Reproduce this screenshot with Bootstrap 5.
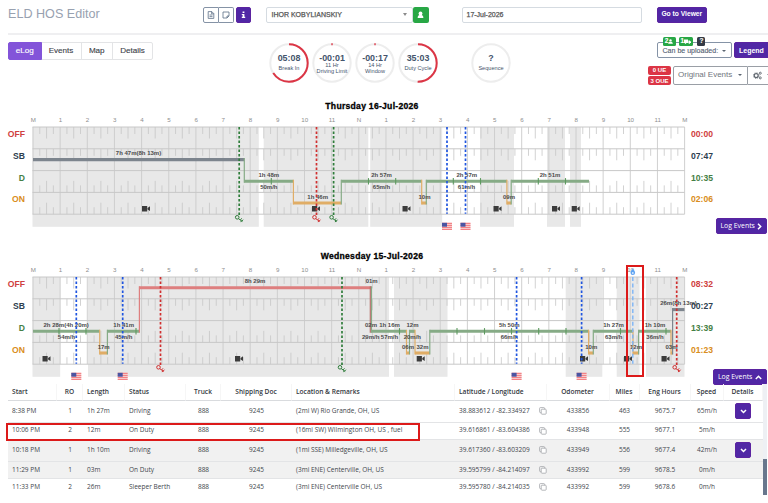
<!DOCTYPE html>
<html lang="en">
<head>
<meta charset="utf-8">
<meta name="viewport" content="width=device-width, initial-scale=1">
<title>ELD HOS Editor</title>
<link href="https://cdn.jsdelivr.net/npm/bootstrap@5.3.0/dist/css/bootstrap.min.css" rel="stylesheet">
<style>
body{font-family:"Liberation Sans",Arial,sans-serif;font-size:7px;line-height:1;color:#4a4f57;width:768px;height:503px;overflow:hidden;background:#fff}
.btn,.form-control,.badge{font-size:7px;line-height:1;border-radius:2px;padding:0;font-family:inherit;white-space:nowrap}
.top-bar{height:34.5px;padding:7px 0 0 8px;margin-right:0}
.top-bar::after{content:"";position:absolute;left:8px;right:0;top:33px;height:1.5px;background:#efeff1}
.app-title{font-size:12.6px;color:#98a1b0;width:195px;margin:0;line-height:15px;font-weight:400}
.sq{width:15.5px;height:15.5px;display:flex;align-items:center;justify-content:center}
.btn-slate{border:1px solid #8593a6;background:#fff;color:#5c6f86}
.btn-slate.lft{border-radius:2px 0 0 2px}
.btn-slate.rgt{border-radius:0 2px 2px 0}
.btn-violet{background:#5027a5;border:1px solid #5b23a0;color:#fff}
.btn-violet:hover{background:#45208f;color:#fff}
#infoBtn{margin-left:1.5px}
#viewerBtn{width:50px;height:15.5px;margin-left:14.8px;font-size:6.7px}
.field{height:15.5px;border:1px solid #d5dbe1;border-radius:2px;padding:0 5px;-webkit-text-stroke:.25px #555;color:#555;white-space:nowrap}
.driver{width:147.5px;margin-left:14.5px}
.date-field{width:180.5px;margin-left:33px;padding-left:4px}
.caret{border-left:2.5px solid transparent;border-right:2.5px solid transparent;border-top:3px solid #8b8b8b;display:inline-block;flex:none}
.caret.sm{border-left-width:2px;border-right-width:2px;border-top-width:2px;border-top-color:#5c6672}
.caret.sm.lite{border-top-color:#fff}
.tool-bar{height:63.5px;padding:7.5px 0 0 8px}
.tabs .btn{height:18px;border:1px solid #e3e4e6;font-size:8.1px;color:#3d4248;padding:0;-webkit-text-stroke:.12px currentColor}
.tabs .btn.active{background:#8354d9;border-color:#8354d9;color:#fff}
.tabs .t1{width:33.5px}.tabs .t2{width:41px}.tabs .t3{width:32.5px}.tabs .t4{width:41px}
.dials{margin-left:115.5px;margin-top:.8px}
.dials svg{width:40px;height:40px;display:block;margin-right:3.15px}
.dials svg:last-child{margin-left:29.8px}
.dials text{text-anchor:middle;fill:#44546c}
.big{font-size:8.9px;font-weight:700}.tiny{font-size:5.6px}
.right-tools{width:128px;position:relative}
.upl-row{padding-left:17px;gap:2px}
.upl{width:75px;flex:none;white-space:nowrap;height:16px;font-size:7.05px;border:1px solid #8593a6;border-radius:2px;color:#556274;padding:1px 5px 0 4.5px;-webkit-text-stroke:.12px}
.upl-badges{position:absolute;top:-6px;left:4.5px}
.upl-badges .badge{height:9px;border-radius:1.5px;display:flex;align-items:center;justify-content:center;font-size:6.5px}
.b1{width:13px}.b2{width:14px;margin-left:3.3px}.b3{width:8px;margin-left:4.7px}
.bg-ok{background:#28a745}.bg-ink{background:#343a46}.bg-err{background:#dc3545}
.legend-btn{width:42px;flex:none;height:16px;font-weight:700;font-size:7px;text-align:left;padding:0 4px}
.evt-row{padding-left:8px;margin-top:7.7px}
.ue{gap:1.8px;margin-right:2px;flex:none}
.ue .badge{width:23px;height:9px;font-size:6px;display:flex;align-items:center;justify-content:center;border-radius:2px}
.evt{height:19.5px;border:1px solid #9a9fa6;font-size:8px;color:#70767d;background:#fff;flex:none;white-space:nowrap}
.evt.main{width:75px;padding:0 5px 0 4px;border-radius:2px 0 0 2px}
.evt.cog{width:40px;border-left:0;border-radius:0;padding-left:4.5px}
.evt.cog .caret{margin-left:5px}
.log-day{height:150.2px}
.log-day.second{height:136px}
.day-title{font-size:8.6px;letter-spacing:.27px;font-weight:700;color:#000;height:17px;line-height:17px;width:744px;text-align:center;margin:0;-webkit-text-stroke:.3px #000}
.codes{width:33px;padding:9px 8px 0 0;text-align:right;font-weight:700;font-size:8.6px}
.sums{width:83px;padding:9px 1px 0 6px;font-weight:700;font-size:8.6px}
.codes div,.sums .v{height:21.8px;line-height:21.8px}
.c-off{color:#cf4040}.c-sb{color:#2d3e4f}.c-d{color:#458045}.c-on{color:#d98d20}
.log-btn{width:51.5px;height:16px;font-family:"Open Sans","Noto Sans",sans-serif;font-size:6.9px;margin-top:6.7px;padding:1px 4px 0}
.second .log-btn{width:54px;margin-top:7.5px}
.grid-svg{width:652px;height:119px;overflow:visible;display:block;flex:none}
.grid-svg .ax{font-size:6.2px;fill:#8e8e8e;text-anchor:middle}
.grid-svg .lb{font-size:6px;font-weight:700;fill:#4c4c4c;text-anchor:middle}
.events-wrap{height:111px;padding-left:8px}
.events{width:754.5px;table-layout:fixed;margin:0;font-family:"Open Sans","Noto Sans",sans-serif;font-size:6.5px;color:#41464c;border-collapse:separate;border-spacing:0}
.events th,.events td{padding:0 0 0 4px;vertical-align:middle;white-space:nowrap;line-height:1;border-bottom:1px solid #e3e4e6}
.events th{height:16.5px;font-weight:600;font-size:6.6px;color:#33383e;border-right:1px solid #f6f6f6;border-bottom-color:#d9dbde}
.events .c{text-align:center;padding-left:0}
.events tr.h1r td{height:21.9px}.events tr.h2r td{height:17.2px}.events tr.last td{height:16.5px;border:0}
.events tr.alt td{background:#f1f1f1}
.events .sq{width:16px;height:16px;margin:0 auto}
.scroll-track{width:4.5px;background:#eef0f4;height:111px}
.scroll-thumb{height:36px;background:#68778d;margin-top:75px}
.mark-box{position:absolute;border:2px solid #dc1a1a;pointer-events:none}
.mark-col{left:626px;top:265px;width:18px;height:112px}
.mark-row{left:6px;top:423px;width:414px;height:18px}
</style>
<script src="https://cdn.jsdelivr.net/npm/bootstrap@5.3.0/dist/js/bootstrap.bundle.min.js"></script>
</head>
<body class="position-relative">
<header class="top-bar d-flex align-items-start">
  <h1 class="app-title">ELD HOS Editor</h1>
  <div class="d-flex">
    <button class="btn btn-slate sq lft"><svg width="8" height="8" viewBox="0 0 8 8" fill="none" stroke="currentColor" stroke-width=".8"><path d="M1.2.6h3.6l2 2v4.8H1.2zM4.6.6v2.2h2.2M2.5 4h3M2.5 5.6h3"/></svg></button>
    <button class="btn btn-slate sq rgt border-start-0"><svg width="8" height="8" viewBox="0 0 8 8" fill="none" stroke="currentColor" stroke-width=".8"><path d="M1 1h6v4L5 7H1zM7 5H5v2"/></svg></button>
    <button class="btn btn-violet sq" id="infoBtn"><svg width="5" height="8" viewBox="0 0 5 8" fill="#fff"><path d="M1.6.6h1.8v1.5H1.6zM.8 3h2.6v2.8h.8V7H.8V5.8h.8V4.1H.8z"/></svg></button>
  </div>
  <div class="field driver d-flex align-items-center justify-content-between"><span>IHOR KOBYLIANSKIY</span><span class="caret"></span></div>
  <button class="btn sq bg-ok"><svg width="7" height="8" viewBox="0 0 7 8" fill="#fff"><circle cx="3.5" cy="2.5" r="1.9"/><path d="M.6 7c0-2 1-3 2-3h1.8c1 0 2 1 2 3z"/></svg></button>
  <div class="field date-field d-flex align-items-center">17-Jul-2026</div>
  <button class="btn btn-violet fw-bold" id="viewerBtn">Go to Viewer</button>
</header>

<section class="tool-bar d-flex align-items-start">
  <div class="btn-group tabs">
    <button class="btn active t1">eLog</button><button class="btn t2">Events</button><button class="btn t3">Map</button><button class="btn t4">Details</button>
  </div>
  <div class="dials d-flex" id="dials"></div>
  <div class="right-tools ms-auto">
    <div class="upl-row d-flex">
      <div class="upl position-relative d-flex align-items-center justify-content-between">
        <span>Can be uploaded:</span><span class="caret sm"></span>
        <div class="upl-badges d-flex">
          <span class="badge bg-ok b1">2<svg width="5" height="5" viewBox="0 0 5 5" fill="#fff"><circle cx="2.5" cy="1.4" r="1.2"/><path d="M.2 4.8c0-1.4 1-2 2.3-2s2.3.6 2.3 2z"/></svg></span>
          <span class="badge bg-ok b2">1<svg width="7" height="5" viewBox="0 0 7 5" fill="#fff"><path d="M0 .5h4V4H0zM4.4 1.5h1.3L7 2.8V4H4.4z"/><circle cx="1.5" cy="4.1" r=".8"/><circle cx="5.3" cy="4.1" r=".8"/></svg></span>
          <span class="badge bg-ink b3">?</span>
        </div>
      </div>
      <button class="btn btn-violet legend-btn d-flex align-items-center">Legend<span class="caret sm lite ms-1"></span></button>
    </div>
    <div class="evt-row d-flex">
      <div class="ue d-flex flex-column"><span class="badge bg-err">0 UE</span><span class="badge bg-err">3 OUE</span></div>
      <div class="evt main d-flex align-items-center justify-content-between"><span>Original Events</span><span class="caret sm"></span></div>
      <div class="evt cog d-flex align-items-center"><svg width="9" height="9" viewBox="0 0 9 9" fill="none" stroke="#5f666e"><circle cx="3.2" cy="4.6" r="2" stroke-width="1.2"/><circle cx="3.2" cy="4.6" r="2.9" stroke-width=".7" stroke-dasharray="1.1 1.18"/><circle cx="7.3" cy="2.2" r="1" stroke-width=".9"/><circle cx="7.3" cy="6.9" r="1" stroke-width=".9"/></svg><span class="caret sm"></span></div>
    </div>
  </div>
</section>

<section class="log-day">
  <h2 class="day-title">Thursday 16-Jul-2026</h2>
  <div class="d-flex">
    <div class="codes"><div class="c-off">OFF</div><div class="c-sb">SB</div><div class="c-d">D</div><div class="c-on">ON</div></div>
    <svg class="grid-svg" id="day1" viewBox="33 115 652 119"></svg>
    <div class="sums"><div class="v c-off">00:00</div><div class="v c-sb">07:47</div><div class="v c-d">10:35</div><div class="v c-on">02:06</div>
      <button class="btn btn-violet log-btn ms-auto d-flex align-items-center justify-content-between">Log Events<svg width="5" height="7" viewBox="0 0 5 7" fill="none" stroke="#fff" stroke-width="1.5"><path d="M1 .8l2.7 2.7L1 6.2"/></svg></button></div>
  </div>
</section>
<section class="log-day second">
  <h2 class="day-title">Wednesday 15-Jul-2026</h2>
  <div class="d-flex">
    <div class="codes"><div class="c-off">OFF</div><div class="c-sb">SB</div><div class="c-d">D</div><div class="c-on">ON</div></div>
    <svg class="grid-svg" id="day2" viewBox="33 115 652 119"></svg>
    <div class="sums"><div class="v c-off">08:32</div><div class="v c-sb">00:27</div><div class="v c-d">13:39</div><div class="v c-on">01:23</div>
      <button class="btn btn-violet log-btn ms-auto d-flex align-items-center justify-content-between">Log Events<svg width="7" height="5" viewBox="0 0 7 5" fill="none" stroke="#fff" stroke-width="1.5"><path d="M.8 4l2.7-2.7L6.2 4"/></svg></button></div>
  </div>
</section>

<section class="events-wrap d-flex">
  <table class="events">
    <colgroup id="cols"></colgroup>
    <thead><tr><th>Start</th><th class="c">RO</th><th>Length</th><th>Status</th><th class="c">Truck</th><th class="c">Shipping Doc</th><th>Location &amp; Remarks</th><th>Latitude / Longitude</th><th class="c">Odometer</th><th class="c">Miles</th><th class="c">Eng Hours</th><th class="c">Speed</th><th class="c">Details</th></tr></thead>
    <tbody id="rows"></tbody>
  </table>
  <div class="scroll-track"><div class="scroll-thumb"></div></div>
</section>
<div class="mark-box mark-col"></div>
<div class="mark-box mark-row"></div>

<script>
// status dials: value, caption lines, share of the ring that is filled
const dials=[["05:08",["Break In"],.655],["-00:01",["11 Hr","Driving Limit"],.012],["-00:17",["14 Hr","Window"],.012],["35:03",["Duty Cycle"],.5],["?",["Sequence"],0]];
document.getElementById("dials").innerHTML=dials.map(([v,c,f])=>{
  const L=2*Math.PI*18.7;
  return `<svg viewBox="0 0 40 40"><g fill="none" stroke-width="2"><circle cx="20" cy="20" r="18.7" stroke="#ededed"/>`+
  (f?`<circle cx="20" cy="20" r="18.7" stroke="#dc3545" stroke-dasharray="${L*f} ${L}" transform="rotate(${f<.1?-92:-90} 20 20)"/>`:"")+
  `</g><text class="big" x="20" y="18.4">${v}</text>`+
  (c.length>1?`<text class="tiny" x="20" y="23.9">${c[0]}</text><text class="tiny" x="20" y="30">${c[1]}</text>`:`<text class="tiny" x="20" y="26.6">${c[0]}</text>`)+`</svg>`;
}).join("");

// chart geometry: left edge, width of an hour, top of the grid, height of a duty row
const X0=33,HR=27.15,T=127,RH=21.8,B=T+4*RH;
const Y={OFF:T+10.8,SB:T+32.6,D:T+54.3,ON:T+76};
const COL={OFF:"#de7f7f",SB:"#7d858e",D:"#86ab86",ON:"#e0ad66"};
const DASH={g:"#2f7d3b",r:"#d02f2f",b:"#1f55e0",l:"#7db4f5"};
function drawDay(id,d){
  let s="";
  const ln=(x1,y1,x2,y2,c,w,e="")=>s+=`<line x1="${x1}" y1="${y1}" x2="${x2}" y2="${y2}" stroke="${c}" stroke-width="${w}" ${e}/>`;
  d.shade.forEach(([a,b])=>s+=`<rect x="${a}" y="${T}" width="${b-a}" height="99.8" fill="#e8e8e8"/>`);
  for(let q=0;q<96;q++){
    if(q%4===0)continue;
    const x=X0+q*HR/4,h=q%2===0?11.5:7;
    [0,1].forEach(r=>ln(x,T+r*RH,x,T+r*RH+h,"#c6c6c6",.8));
    [3,4].forEach(r=>ln(x,T+r*RH,x,T+r*RH-h,"#c6c6c6",.8));
  }
  for(let h=0;h<=24;h++){
    const x=X0+h*HR;
    ln(x,T,x,B,"#cbcbcb",.9);
    s+=`<text class="ax" x="${x+.3}" y="122.2">${h%24===0?"M":h===12?"N":h%12}</text>`;
  }
  for(let r=0;r<=4;r++)ln(X0-.5,T+r*RH,X0+24*HR,T+r*RH,"#c8c8c8",1);
  d.seg.forEach(([k,a,b],i)=>{
    ln(a,Y[k],b,Y[k],COL[k],3.1);
    const n=d.seg[i+1];
    if(n)ln(b,Math.min(Y[k],Y[n[0]])-1.5,b,Math.max(Y[k],Y[n[0]])+1.5,COL[n[0]],1.2);
    if(n&&k==="OFF")ln(b-1.2,Y.OFF-1.5,b-1.2,Y.D+1.5,"#b5726c",1.2);
  });
  d.notch.forEach(x=>ln(x,Y.D-3.2,x,Y.D+3.2,"#5d9a5f",1.1));
  d.cam.forEach(x=>s+=`<path fill="#3c3c3c" d="M${x-4} ${T+79}h5.2v5.5h-5.2zM${x+1.6} ${T+81}l2.4-1.7v4.8l-2.4-1.7z"/>`);
  d.lab.forEach(([t,x,y])=>s+=`<text class="lb" x="${x}" y="${y+2.2}">${t}</text>`);
  d.dash.forEach(([k,x])=>{
    ln(x,T,x,k==="b"||k==="l"?B-.5:B+1,DASH[k],k==="l"?1.4:1.7,`stroke-dasharray="${k==="l"?"4 2.4":"2.5 2"}"`);
    if(k==="g"||k==="r")s+=`<g transform="translate(${x-.4} 218.2)" fill="none" stroke="${DASH[k]}"><circle cx="-1.6" cy="-.9" r="1.8" stroke-width="1"/><path stroke-width="1" d="M-.4.4L3.6 3.3M1.6 1.7l1.3-1.6M3 3l1.3-1.5M2.600 2.600l-.6 1.300"/></g>`;
    if(k==="b"){
      s+=`<g transform="translate(${x-5} 222.8)"><rect width="10" height="7" fill="#fbe3e3"/>`;
      for(let i=0;i<4;i++)s+=`<rect y="${i*2}" width="10" height="1" fill="#f06a6f"/>`;
      s+=`<rect width="5" height="3.9" fill="#4a55a2"/></g>`;
    }
    if(k==="l")s+=`<path fill="#5fa3f2" d="M${x} 118.6c1.2 1.8 2.3 2.8 2.3 4.2a2.3 2.3 0 0 1-4.6 0c0-1.4 1.1-2.4 2.3-4.2z"/><circle cx="${x}" cy="123" r=".9" fill="#d9ebff"/>`;
  });
  document.getElementById(id).innerHTML=s;
}
// vertical centres of the labels above, below and under the driving line
const U=175,L=187,N=197;
drawDay("day1",{
  shade:[[32.5,258.8],[263.7,368.3],[370.2,442.2],[480,514],[547,565],[570,581]],
  seg:[["SB",33,244.3],["D",244.3,293.4],["ON",293.4,341.3],["D",341.3,421.7],["ON",421.7,426.3],["D",426.3,506.9],["ON",506.9,511.2],["D",511.2,589]],
  notch:[271.3,368.5,395.7,453.3,480.5,538.3,565.5],
  cam:[146,316,406.5,497.5,556,575.7],
  dash:[["g",239.2],["r",316.5],["g",333.6],["b",447],["b",465.5]],
  lab:[["7h 47m(8h 13m)",138.5,153],["1h 48m",268.8,U],["50m/h",268.8,L],["1h 46m",317.7,N],["2h 57m",381.5,U],["65m/h",381.5,L],["10m",424.5,N],["2h 57m",466.8,U],["61m/h",466.5,L],["09m",509,N],["2h 51m",550,U]]
});
drawDay("day2",{
  shade:[[32.5,60.2],[88,389],[394,447.5],[565.7,602.3],[616.7,639.5],[646,684.5]],
  seg:[["D",33,99.7],["ON",99.7,107.4],["D",107.4,139.4],["OFF",139.4,371.5],["D",371.5,406.5],["ON",406.5,409.5],["D",409.5,415],["ON",415,429.8],["D",429.8,588.6],["ON",588.6,593.3],["D",593.3,633],["ON",633,638.6],["D",638.6,671],["ON",671,672.6],["SB",672.6,684.5]],
  notch:[59,86,136,399.5,457,484.5,511.5,538.7,566,620.5,666],
  cam:[46.5,239,420.7,584,628,665.5],
  dash:[["b",76.3],["b",122.7],["r",160.5],["g",342],["b",516.6],["b",581.6],["l",632.8],["r",676.7]],
  lab:[["2h 28m(4h 20m)",66.2,U],["54m/h",66.5,L],["17m",103.7,N],["1h 41m",123.7,U],["45m/h",123.7,L],["8h 29m",255,131.2],["01m",371.7,131.2],["02m",371,U],["1h 16m",389.5,U],["29m/h",370.7,L],["57m/h",389.5,L],["12m",412.5,U],["20m/h",412.3,L],["06m",408,N],["32m",422.5,N],["5h 50m",509.3,U],["66m/h",509.3,L],["10m",591.3,N],["1h 27m",613.5,U],["63m/h",613.7,L],["12m",636,N],["1h 10m",655,U],["36m/h",655,L],["03m",671.5,N],["26m(8h 13m)",678.5,153.2]]
});

document.getElementById("cols").innerHTML=[49,26,42,61,35,71,163,91.5,63,30,51,33,39].map(w=>`<col style="width:${w}px">`).join("");
const copy=`<svg width="8" height="8" viewBox="0 0 8 8" fill="none" stroke="#a3a6aa" stroke-width=".8"><rect x=".6" y=".6" width="5" height="5" rx=".8"/><rect x="2.2" y="2.2" width="5" height="5" rx=".8" fill="#fff"/></svg>`;
const btn=`<button class="btn btn-violet sq"><svg width="7" height="5" viewBox="0 0 7 5" fill="none" stroke="#fff" stroke-width="1.5"><path d="M1 1l2.5 2.5L6 1"/></svg></button>`;
const data=[
 ["8:38 PM",1,"1h 27m","Driving","(2mi W) Rio Grande, OH, US","38.883612 / -82.334927",433856,463,"9675.7","65m/h",1,"h1r"],
 ["10:06 PM",2,"12m","On Duty","(16mi SW) Wilmington OH, US , fuel","39.616861 / -83.604386",433948,555,"9677.1","5m/h",0,"h2r"],
 ["10:18 PM",1,"1h 10m","Driving","(1mi SSE) Milledgeville, OH, US","39.617360 / -83.603209",433949,556,"9677.4","42m/h",1,"h1r alt"],
 ["11:29 PM",1,"03m","On Duty","(3mi ENE) Centerville, OH, US","39.595799 / -84.214097",433992,599,"9678.5","0m/h",0,"h2r alt"],
 ["11:33 PM",2,"26m","Sleeper Berth","(3mi ENE) Centerville OH, US","39.595780 / -84.214035",433992,599,"9678.6","0m/h",0,"last"]];
document.getElementById("rows").innerHTML=data.map(r=>`<tr class="${r[11]}"><td>${r[0]}</td><td class="c">${r[1]}</td><td>${r[2]}</td><td>${r[3]}</td><td class="c">888</td><td class="c">9245</td><td>${r[4]}</td><td><div class="d-flex align-items-center justify-content-between"><span>${r[5]}</span>${copy}</div></td><td class="c">${r[6]}</td><td class="c">${r[7]}</td><td class="c">${r[8]}</td><td class="c">${r[9]}</td><td class="c">${r[10]?btn:""}</td></tr>`).join("");
</script>
</body>
</html>
